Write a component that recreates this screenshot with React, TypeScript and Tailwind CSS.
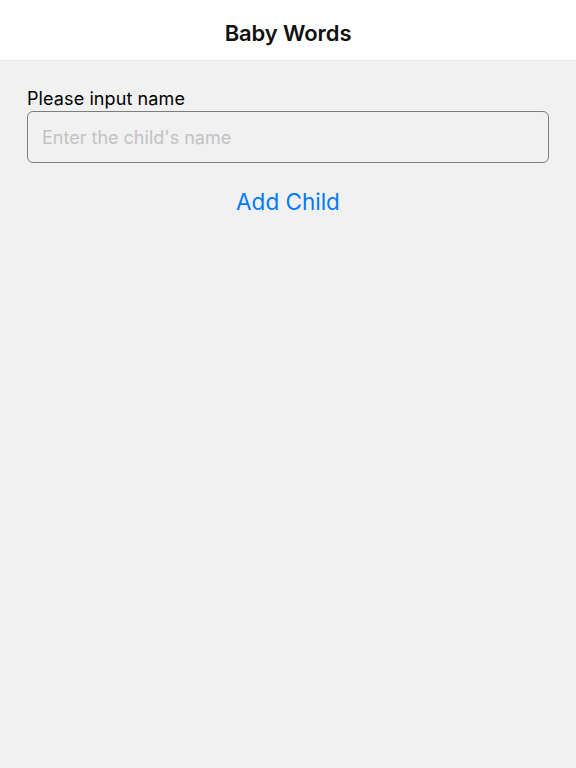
import React from "react";

export default function App() {
  return (
    <div className="w-[576px] h-[768px] bg-[#f1f1f1] flex flex-col" style={{ fontFamily: "Inter, 'Noto Sans', sans-serif" }}>
      <div className="h-[61px] bg-white border-b border-[#e4e4e4] flex items-center justify-center pt-[6px]">
        <span className="text-[22px] font-semibold text-[#111] tracking-[-0.1px]">Baby Words</span>
      </div>
      <div className="px-[27px] pt-[26px] flex flex-col">
        <label className="text-[18px] leading-[24px] text-black tracking-[0.1px]">Please input name</label>
        <div className="h-[52px] border-[1.5px] border-[#7d7d7d] rounded-[6px] flex items-center px-[14px]">
          <input
            className="w-full bg-transparent outline-none text-[18px] placeholder:text-[#c2c2c2]"
            placeholder="Enter the child's name"
          />
        </div>
        <div className="flex justify-center mt-[25px]">
          <button className="text-[22.5px] leading-[28px] text-[#007aff]">Add Child</button>
        </div>
      </div>
    </div>
  );
}
